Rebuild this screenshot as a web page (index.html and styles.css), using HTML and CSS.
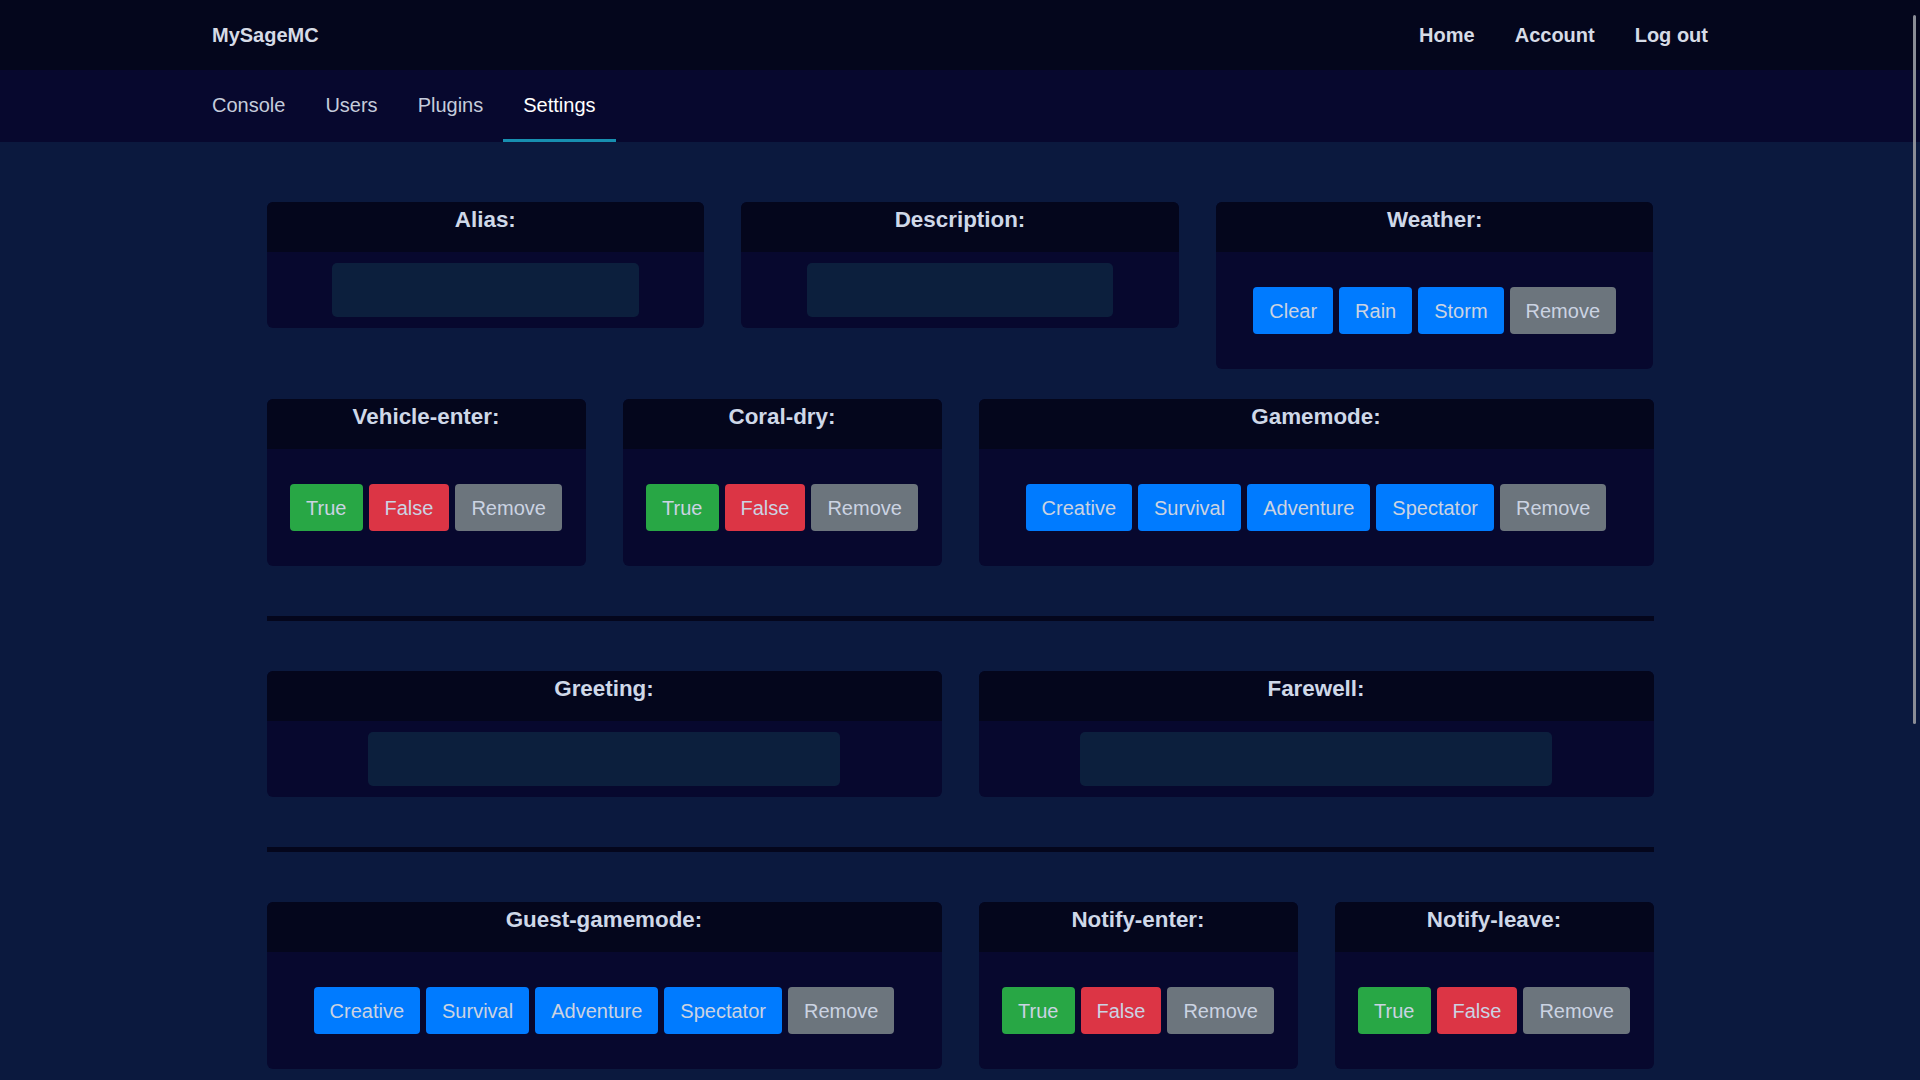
FILE: index.html
```html
<!DOCTYPE html>
<html lang="en">
<head>
<meta charset="utf-8">
<title>MySageMC - Settings</title>
<link rel="stylesheet" href="styles.css">
</head>
<body>
<header class="topbar">
  <div class="topbar-inner">
    <a class="brand" href="#">MySageMC</a>
    <nav class="toplinks">
      <a href="#">Home</a>
      <a href="#">Account</a>
      <a href="#">Log out</a>
    </nav>
  </div>
</header>
<nav class="tabbar">
  <div class="tabbar-inner">
    <a class="tab" href="#">Console</a>
    <a class="tab" href="#">Users</a>
    <a class="tab" href="#">Plugins</a>
    <a class="tab active" href="#">Settings</a>
  </div>
</nav>

<main class="content">
  <section class="grid">
    <div class="card span-4">
      <h3 class="card-title">Alias:</h3>
      <div class="card-body field"><input class="input" type="text"></div>
    </div>
    <div class="card span-4">
      <h3 class="card-title">Description:</h3>
      <div class="card-body field"><input class="input" type="text"></div>
    </div>
    <div class="card span-4">
      <h3 class="card-title">Weather:</h3>
      <div class="card-body choices">
        <button class="btn blue">Clear</button>
        <button class="btn blue">Rain</button>
        <button class="btn blue">Storm</button>
        <button class="btn grey">Remove</button>
      </div>
    </div>
  </section>

  <section class="grid next">
    <div class="card span-3">
      <h3 class="card-title">Vehicle-enter:</h3>
      <div class="card-body choices">
        <button class="btn green">True</button>
        <button class="btn red">False</button>
        <button class="btn grey">Remove</button>
      </div>
    </div>
    <div class="card span-3">
      <h3 class="card-title">Coral-dry:</h3>
      <div class="card-body choices">
        <button class="btn green">True</button>
        <button class="btn red">False</button>
        <button class="btn grey">Remove</button>
      </div>
    </div>
    <div class="card span-6">
      <h3 class="card-title">Gamemode:</h3>
      <div class="card-body choices">
        <button class="btn blue">Creative</button>
        <button class="btn blue">Survival</button>
        <button class="btn blue">Adventure</button>
        <button class="btn blue">Spectator</button>
        <button class="btn grey">Remove</button>
      </div>
    </div>
  </section>

  <hr class="divider">

  <section class="grid">
    <div class="card span-6">
      <h3 class="card-title">Greeting:</h3>
      <div class="card-body field"><input class="input" type="text"></div>
    </div>
    <div class="card span-6">
      <h3 class="card-title">Farewell:</h3>
      <div class="card-body field"><input class="input" type="text"></div>
    </div>
  </section>

  <hr class="divider">

  <section class="grid">
    <div class="card span-6">
      <h3 class="card-title">Guest-gamemode:</h3>
      <div class="card-body choices">
        <button class="btn blue">Creative</button>
        <button class="btn blue">Survival</button>
        <button class="btn blue">Adventure</button>
        <button class="btn blue">Spectator</button>
        <button class="btn grey">Remove</button>
      </div>
    </div>
    <div class="card span-3">
      <h3 class="card-title">Notify-enter:</h3>
      <div class="card-body choices">
        <button class="btn green">True</button>
        <button class="btn red">False</button>
        <button class="btn grey">Remove</button>
      </div>
    </div>
    <div class="card span-3">
      <h3 class="card-title">Notify-leave:</h3>
      <div class="card-body choices">
        <button class="btn green">True</button>
        <button class="btn red">False</button>
        <button class="btn grey">Remove</button>
      </div>
    </div>
  </section>
</main>

<div class="scroll-thumb"></div>
</body>
</html>
```
FILE: styles.css
```css
html {
  scrollbar-width: none;
}
html::-webkit-scrollbar {
  display: none;
}
body {
  margin: 0;
  background: #0b193e;
  font-family: "Liberation Sans", Arial, sans-serif;
  color: #cdd5e5;
}

/* top bar */
.topbar {
  background: #04061c;
  height: 70px;
}
.topbar-inner {
  width: 80%;
  height: 100%;
  margin: 0 auto;
  display: flex;
  align-items: center;
  justify-content: space-between;
}
.brand {
  padding: 0 20px;
  font-size: 20px;
  font-weight: 700;
  line-height: 20px;
  color: #d6dbe6;
  text-decoration: none;
}
.toplinks {
  display: flex;
}
.toplinks a {
  padding: 0 20px;
  font-size: 20px;
  font-weight: 700;
  line-height: 20px;
  color: #d6dbe6;
  text-decoration: none;
}

/* tab bar */
.tabbar {
  background: #07082e;
  height: 72px;
}
.tabbar-inner {
  width: 80%;
  height: 100%;
  margin: 0 auto;
  display: flex;
}
.tab {
  box-sizing: border-box;
  display: flex;
  align-items: center;
  padding: 2px 20px 0;
  font-size: 20px;
  color: #c5ccdb;
  text-decoration: none;
  border-bottom: 3px solid transparent;
}
.tab.active {
  color: #ffffff;
  border-bottom-color: #178fb0;
}

/* content */
.content {
  width: 1387px;
  margin: 0 auto;
  padding: 60px 0 80px;
}
.grid {
  display: grid;
  grid-template-columns: repeat(12, minmax(0, 1fr));
  column-gap: 37px;
  align-items: start;
}
.grid.next {
  margin-top: 30px;
}
.span-3 { grid-column: span 3; }
.span-4 { grid-column: span 4; }
.span-6 { grid-column: span 6; }

.divider {
  height: 5px;
  margin: 50px 0;
  border: 0;
  background: #04061c;
}

.card {
  background: #07082e;
  border-radius: 6px;
  overflow: hidden;
}
.card-title {
  box-sizing: border-box;
  height: 50px;
  margin: 0;
  padding-top: 4px;
  background: #04061c;
  text-align: center;
  font-size: 22.4px;
  font-weight: 700;
  line-height: 27px;
  color: #cfd8e8;
}
.card-body {
  display: flex;
  justify-content: center;
}
.card-body.field {
  padding: 11px 0;
}
.card-body.choices {
  padding: 35px 0;
  gap: 6px;
}
.input {
  box-sizing: border-box;
  width: 70%;
  height: 54px;
  border: 0;
  border-radius: 5px;
  background: #0c1f3d;
}

.btn {
  height: 47px;
  padding: 1px 16px 0;
  border: 0;
  border-radius: 4px;
  font-family: "Liberation Sans", Arial, sans-serif;
  font-size: 20px;
  color: #cbd3e2;
}
.btn.blue { background: #007bff; }
.btn.green { background: #28a745; }
.btn.red { background: #dc3545; }
.btn.grey { background: #6c757d; }

/* overlay scrollbar thumb */
.scroll-thumb {
  position: fixed;
  top: 15px;
  right: 4px;
  width: 3px;
  height: 709px;
  border-radius: 2px;
  background: #8a8d96;
}
```
